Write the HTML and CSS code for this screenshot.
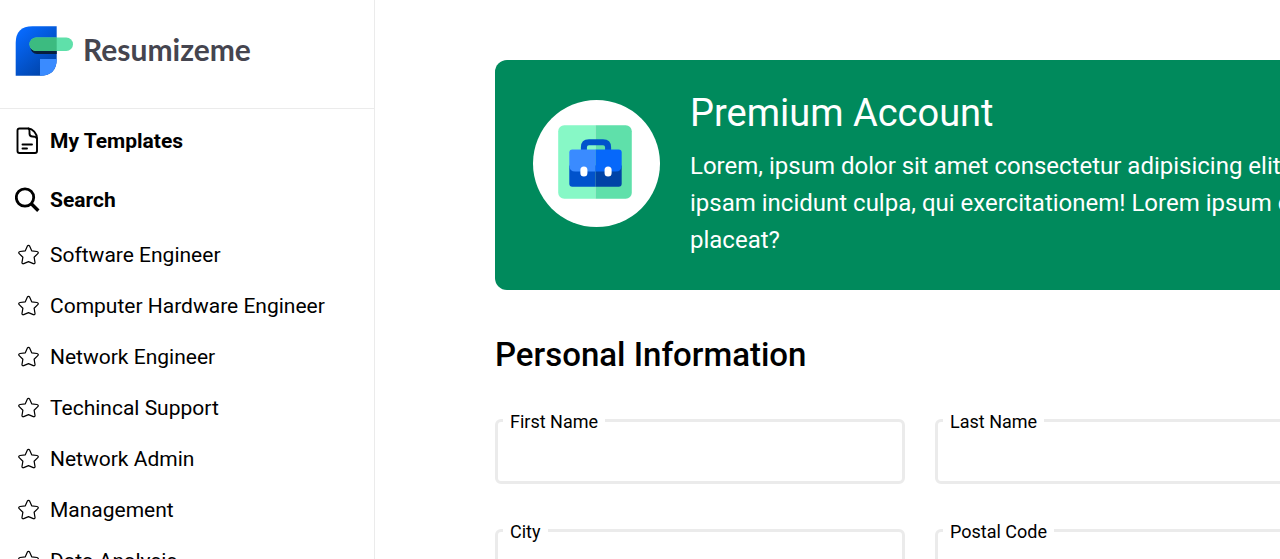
FILE: index.html
```html
<!DOCTYPE html>
<html lang="en">
<head>
<meta charset="utf-8">
<title>Resumizeme</title>
<link rel="stylesheet" href="styles.css">
</head>
<body>
<svg class="sprite" aria-hidden="true">
  <symbol id="star" viewBox="0 0 22 22">
    <path d="M10.500 1.300c.5 0 .9.3 1.100.8l2.100 4.700 5.300.7c1.200.2 1.600 1.300.8 2.100l-3.700 3.600.9 5.200c.2 1.100-.8 1.700-1.700 1.200L10.500 17.600l-4.800 2c-.9.5-1.900-.1-1.700-1.200l.9-5.200-3.700-3.600c-.8-.8-.4-1.900.8-2.100l5.300-.7 2.100-4.700c.2-.5.6-.8 1.100-.8z" fill="none" stroke="currentColor" stroke-width="1.2" stroke-linejoin="round"/>
  </symbol>
</svg>
<div class="page">
  <aside class="sidebar">
    <a class="brand" href="#">
      <svg class="brand-mark" viewBox="0 0 58 51" aria-hidden="true">
        <defs>
          <linearGradient id="blue" x1="0" y1="0" x2="0.7" y2="1">
            <stop offset="0.15" stop-color="#0668fa"/>
            <stop offset="1" stop-color="#0043a8"/>
          </linearGradient>
        </defs>
        <path d="M.7 49.700V17Q.7.2 17.500.2H41.700V33Q41.700 49.700 25 49.700Z" fill="url(#blue)"/>
        <path d="M25 49.700V33H41.700Q41.700 49.700 25 49.700Z" fill="#3a8bff"/>
        <path d="M41.700 15H22a6.500 6.500 0 0 0 0 13h19.700z" fill="#071f3d"/>
        <rect x="14.500" y="11.500" width="43.500" height="13.500" rx="6.700" fill="#5fe0aa"/>
        <path d="M41.700 11.500H21.200a6.700 6.700 0 0 0 0 13.500H41.700z" fill="#3cbb80"/>
      </svg>
      <span class="brand-name">Resumizeme</span>
    </a>
    <nav class="menu">
      <a class="menu-main" href="#">
        <svg class="icon" viewBox="0 0 26 28" fill="none" stroke="currentColor" stroke-width="1.900" stroke-linejoin="round" stroke-linecap="round" aria-hidden="true">
          <path d="M4.500 1.500h9c4 .2 8.500 5 8.500 10v12.500q0 2-2 2H4.500q-2 0-2-2V3.500q0-2 2-2z"/>
          <path d="M13.500 1.500c1.500 1 1 3 1 5q0 3 3 3c2.500 0 3.500 0 4.500 2M7.500 17.500h9.500M7.500 21.500h4.500"/>
        </svg>
        My Templates
      </a>
      <a class="menu-main" href="#">
        <svg class="icon" viewBox="0 0 26 28" fill="none" stroke="currentColor" stroke-width="2.800" aria-hidden="true">
          <circle cx="10" cy="11.500" r="8.700"/>
          <path d="M16.300 17.800l7 7" stroke-width="3.400"/>
        </svg>
        Search
      </a>
      <ul class="menu-list">
        <li><a class="menu-item" href="#"><svg class="star"><use href="#star"/></svg>Software Engineer</a></li>
        <li><a class="menu-item" href="#"><svg class="star"><use href="#star"/></svg>Computer Hardware Engineer</a></li>
        <li><a class="menu-item" href="#"><svg class="star"><use href="#star"/></svg>Network Engineer</a></li>
        <li><a class="menu-item" href="#"><svg class="star"><use href="#star"/></svg>Techincal Support</a></li>
        <li><a class="menu-item" href="#"><svg class="star"><use href="#star"/></svg>Network Admin</a></li>
        <li><a class="menu-item" href="#"><svg class="star"><use href="#star"/></svg>Management</a></li>
        <li><a class="menu-item" href="#"><svg class="star"><use href="#star"/></svg>Data Analysis</a></li>
      </ul>
    </nav>
  </aside>
  <main class="content">
    <section class="banner">
      <svg class="banner-icon" viewBox="0 0 126 126" aria-hidden="true">
        <circle cx="63" cy="63" r="63" fill="#fff"/>
        <path d="M62 25H31a6 6 0 0 0-6 6v61a6 6 0 0 0 6 6h31z" fill="#87f8c6"/>
        <path d="M62 25h30a6 6 0 0 1 6 6v61a6 6 0 0 1-6 6H62z" fill="#5fe0aa"/>
        <path d="M50.500 51v-4q0-5 5-5h14q5 0 5 5v4" fill="none" stroke="#0052cc" stroke-width="6"/>
        <path d="M36 65h26v21H39q-3 0-3-3z" fill="#0052cc"/>
        <path d="M62 65h26v18q0 3-3 3H62z" fill="#0043a6"/>
        <path d="M62 49v22H42q-6 0-6-6V52q0-3 3-3z" fill="#3a8bff"/>
        <path d="M62 49h23q3 0 3 3v13q0 6-6 6H62z" fill="#0668fa"/>
        <rect x="47" y="66" width="7" height="10" rx="3.500" fill="#fff"/>
        <rect x="71" y="66" width="7" height="10" rx="3.500" fill="#fff"/>
      </svg>
      <div class="banner-text">
        <h1 class="banner-title">Premium Account</h1>
        <p class="banner-copy">Lorem, ipsum dolor sit amet consectetur adipisicing elit. Quos voluptatibus, totam harum<br>ipsam incidunt culpa, qui exercitationem! Lorem ipsum dolor sit amet consectetur<br>placeat?</p>
      </div>
    </section>
    <h2 class="section-title">Personal Information</h2>
    <form class="fields">
      <fieldset class="field"><legend><label for="first">First Name</label></legend><input id="first" type="text"></fieldset>
      <fieldset class="field"><legend><label for="last">Last Name</label></legend><input id="last" type="text"></fieldset>
      <fieldset class="field"><legend><label for="email">Email</label></legend><input id="email" type="text"></fieldset>
      <fieldset class="field"><legend><label for="city">City</label></legend><input id="city" type="text"></fieldset>
      <fieldset class="field"><legend><label for="postal">Postal Code</label></legend><input id="postal" type="text"></fieldset>
      <fieldset class="field"><legend><label for="country">Country</label></legend><input id="country" type="text"></fieldset>
    </form>
  </main>
</div>
</body>
</html>
```
FILE: styles.css
```css
* { box-sizing: border-box; }
html { scrollbar-width: none; }
body {
  margin: 0;
  font-family: Roboto, "Liberation Sans", sans-serif;
  color: #000;
  background: #fff;
}
a { color: inherit; text-decoration: none; }
.sprite { display: none; }
.page { display: flex; height: 100vh; overflow: hidden; }
.sidebar {
  flex: 0 0 375px;
  border-right: 1px solid #ebebeb;
  overflow: hidden;
}
.brand {
  display: flex;
  align-items: flex-start;
  gap: 10px;
  padding: 26px 15px 31px;
  border-bottom: 1px solid #ebebeb;
}
.brand-mark { width: 58px; height: 51px; }
.brand-name {
  font: 700 30px/46px Lato, sans-serif;
  color: #45454f;
}
.menu { padding: 2px 0 0 15px; }
.menu-main {
  display: flex;
  align-items: center;
  gap: 9px;
  height: 59px;
  font-size: 21px;
  font-weight: 700;
}
.icon { width: 26px; height: 28px; }
.menu-list { margin: 0; padding: 0; list-style: none; }
.menu-item {
  display: flex;
  align-items: center;
  gap: 10px;
  height: 51px;
  padding-left: 3px;
  font-size: 21px;
}
.star { width: 22px; height: 22px; }
.content {
  flex: 1 0 1530px;
  padding: 60px 120px;
}
.banner {
  display: flex;
  gap: 30px;
  padding: 30px 38px 31px;
  border-radius: 12px;
  background: #008a5c;
  color: #fff;
}
.banner-icon { flex: none; width: 127px; height: 127px; margin-top: 10px; }
.banner-title {
  margin: 0;
  font-size: 38px;
  font-weight: 400;
  line-height: 46px;
}
.banner-copy {
  margin: 12px 0 0;
  font-size: 24px;
  line-height: 37px;
}
.section-title {
  margin: 45px 0 32px;
  font-size: 33px;
  font-weight: 500;
  line-height: 40px;
}
.fields {
  display: grid;
  grid-template-columns: repeat(3, 1fr);
  gap: 33px 30px;
}
.field {
  min-width: 0;
  margin: 0;
  padding: 0 5px;
  border: 3px solid #ebebeb;
  border-radius: 6px;
}
.field legend { padding: 4px 7px 0; font-size: 18px; line-height: 22px; }
.field input {
  display: block;
  width: 100%;
  height: 48px;
  padding: 0 7px;
  border: 0;
  outline: 0;
  background: transparent;
  font: inherit;
  font-size: 18px;
}
```
